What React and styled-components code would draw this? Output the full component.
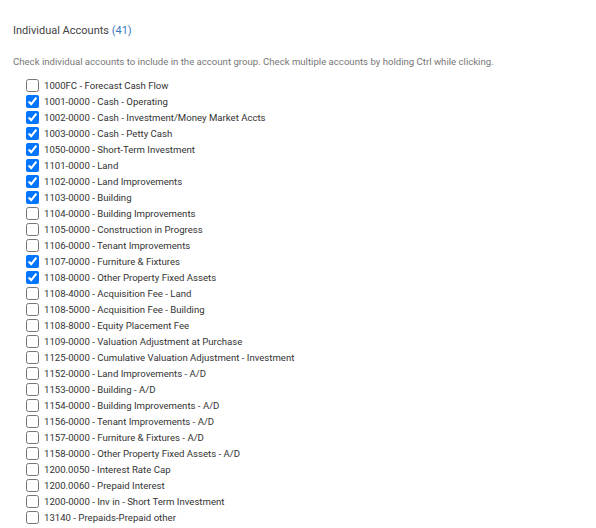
import styled, { createGlobalStyle } from 'styled-components';

const accounts = [
  ['1000FC - Forecast Cash Flow', false],
  ['1001-0000 - Cash - Operating', true],
  ['1002-0000 - Cash - Investment/Money Market Accts', true],
  ['1003-0000 - Cash - Petty Cash', true],
  ['1050-0000 - Short-Term Investment', true],
  ['1101-0000 - Land', true],
  ['1102-0000 - Land Improvements', true],
  ['1103-0000 - Building', true],
  ['1104-0000 - Building Improvements', false],
  ['1105-0000 - Construction in Progress', false],
  ['1106-0000 - Tenant Improvements', false],
  ['1107-0000 - Furniture & Fixtures', true],
  ['1108-0000 - Other Property Fixed Assets', true],
  ['1108-4000 - Acquisition Fee - Land', false],
  ['1108-5000 - Acquisition Fee - Building', false],
  ['1108-8000 - Equity Placement Fee', false],
  ['1109-0000 - Valuation Adjustment at Purchase', false],
  ['1125-0000 - Cumulative Valuation Adjustment - Investment', false],
  ['1152-0000 - Land Improvements - A/D', false],
  ['1153-0000 - Building - A/D', false],
  ['1154-0000 - Building Improvements - A/D', false],
  ['1156-0000 - Tenant Improvements - A/D', false],
  ['1157-0000 - Furniture & Fixtures - A/D', false],
  ['1158-0000 - Other Property Fixed Assets - A/D', false],
  ['1200.0050 - Interest Rate Cap', false],
  ['1200.0060 - Prepaid Interest', false],
  ['1200-0000 - Inv in - Short Term Investment', false],
  ['13140 - Prepaids-Prepaid other', false]
];

const GlobalStyle = createGlobalStyle`
  body {
    margin: 0;
    background: #fff;
    font-family: Roboto, "Liberation Sans", sans-serif;
  }
`;

const Panel = styled.div`
  padding: 23px 13px 0 13px;
`;

const Title = styled.div`
  font-size: 11px;
  line-height: 16px;
  color: #444;
`;

const Count = styled.span`
  color: #3a7bbf;
`;

const Help = styled.div`
  margin-top: 17px;
  font-size: 9.6px;
  line-height: 12px;
  color: #777;
`;

const List = styled.ul`
  list-style: none;
  margin: 9px 0 0 0;
  padding: 0 0 0 12px;
`;

const Row = styled.li`
  display: flex;
  align-items: center;
  height: 16px;
  font-size: 9.6px;
  color: #333;
`;

const Check = styled.input`
  width: 13px;
  height: 13px;
  margin: 0 5px 0 1px;
  accent-color: #0075ff;
`;

function App() {
  return (
    <Panel>
      <GlobalStyle />
      <Title>
        Individual Accounts <Count>(41)</Count>
      </Title>
      <Help>
        Check individual accounts to include in the account group. Check multiple accounts by holding Ctrl while clicking.
      </Help>
      <List>
        {accounts.map(([label, checked]) => (
          <Row key={label}>
            <Check type="checkbox" defaultChecked={checked} />
            {label}
          </Row>
        ))}
      </List>
    </Panel>
  );
}

export default App;
